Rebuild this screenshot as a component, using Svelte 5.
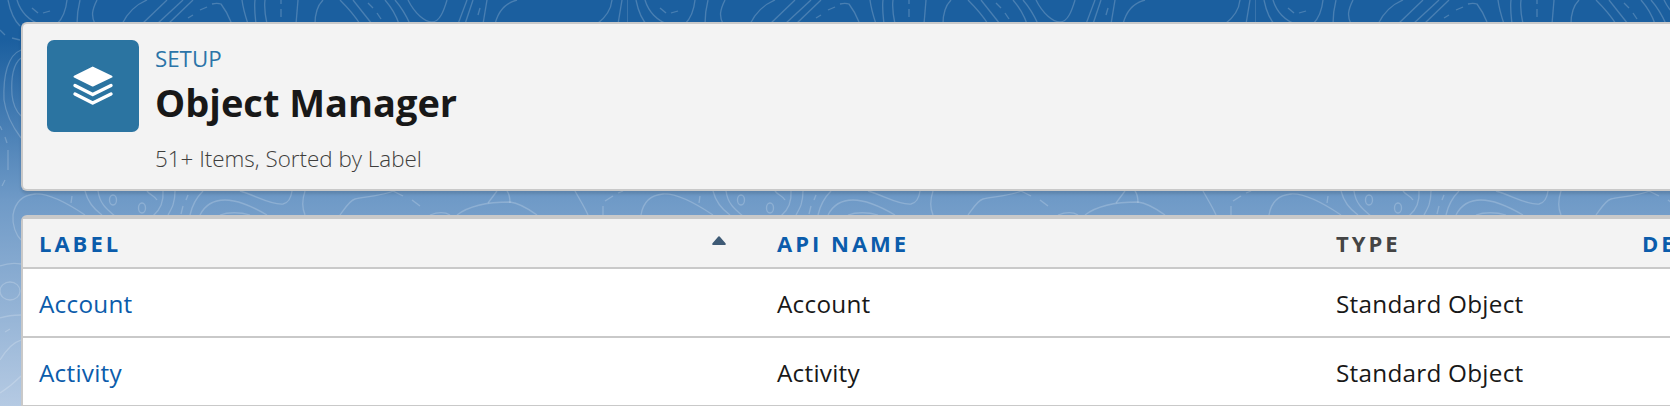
<script>
  const columnas = [
    { id: 'label', titulo: 'Label', sortable: true, sorted: true },
    { id: 'api', titulo: 'API Name', sortable: true },
    { id: 'type', titulo: 'Type', sortable: false },
    { id: 'desc', titulo: 'Description', sortable: true }
  ];

  const objetos = [
    { label: 'Account', api: 'Account', type: 'Standard Object' },
    { label: 'Activity', api: 'Activity', type: 'Standard Object' }
  ];

  // contour lines of the setup background, one tile is 628px wide
  const lineas = [
    // top strip
    'M8 0C10 10 14 20 20 26', 'M17 0C20 10 28 22 45 26', 'M32 8L38 13', 'M43 13L50 11',
    'M67 0C66 10 63 18 57 24', 'M80 0C78 8 77 15 77 24', 'M97 0C92 10 91 16 95 24',
    'M147 0C135 5 128 12 122 24', 'M167 0L142 24', 'M183 0L157 24', 'M193 0L168 24',
    'M193 15L188 18', 'M200 10L207 7', 'M212 4C216 3 218 3 221 4C224 8 228 14 231 22',
    'M242 0C243 8 245 15 248 24', 'M255 0C254 8 255 15 256 24', 'M265 0C264 8 265 15 267 24',
    'M281 0L281 4', 'M281 9L281 17', 'M298 0L296 24', 'M323 0C318 5 315 14 315 24',
    'M340 0C348 8 355 16 360 24', 'M353 0L372 24', 'M368 3L373 8', 'M377 13L381 19',
    'M385 0C392 8 396 15 399 24', 'M395 0C402 8 406 15 410 24',
    'M408 0C415 14 425 22 432 22C440 22 444 10 447 0',
    'M467 0L458 24', 'M473 0L465 24', 'M480 8L478 15', 'M487 0L483 24',
    'M517 0C505 3 498 12 495 24', 'M612 0C611 10 605 18 597 24', 'M622 0L618 24', 'M628 0L628 24',
    // gap between the cards
    'M13 215C15 203 22 195 35 194C50 193 70 205 85 215', 'M72 196L71 203',
    'M85 191C88 203 95 210 102 215', 'M98 191C100 205 108 210 115 216',
    'M163 191C164 203 160 210 153 216', 'M175 191C175 203 172 208 168 215',
    'M147 191C150 195 155 196 157 200', 'M188 195L186 200', 'M183 206L181 214',
    'M203 191C196 198 192 206 190 215', 'M200 215C205 205 213 200 225 200C240 200 255 208 267 215',
    'M220 215C228 212 240 212 250 215', 'M240 191C255 195 270 205 283 204C288 203 291 198 292 191',
    'M305 191C302 200 302 208 305 215', 'M340 215C345 208 350 200 355 199C365 197 385 195 393 191',
    'M393 191L403 196', 'M412 200L420 206', 'M430 215C438 212 445 212 450 215',
    'M457 215C470 205 490 202 510 202C520 203 530 210 537 215', 'M488 203L497 191',
    'M507 191C510 195 510 200 510 203', 'M575 191C580 200 585 208 588 215',
    'M605 201L613 196', 'M603 206L603 215', 'M618 193L623 191'
  ];

  // only on the left margin, the cards hide the rest
  const margen = [
    'M0 30L5 35', 'M12 38L20 40', 'M21 50C8 55 3 75 4 100C6 115 15 130 21 138',
    'M21 58C12 65 11 80 12 95C13 105 17 112 21 116', 'M0 126L2 130', 'M5 137L7 143',
    'M8 150L8 170', 'M5 180L2 186', 'M13 215C12 225 16 235 21 240',
    'M0 266C8 263 15 263 21 264', 'M0 318C6 316 14 315 21 315', 'M5 332L10 329',
    'M0 360C6 350 14 342 21 340', 'M0 393C8 388 15 382 21 376'
  ];
</script>

<div class="page">
  <svg class="contornos" width="1670" height="406" aria-hidden="true">
    <defs>
      <pattern id="topo" width="628" height="406" patternUnits="userSpaceOnUse">
        {#each lineas as d}
          <path {d} />
        {/each}
        <ellipse cx="113" cy="200" rx="3.5" ry="5" />
        <ellipse cx="142" cy="208" rx="3.5" ry="5" />
      </pattern>
    </defs>
    <rect width="1670" height="406" fill="url(#topo)" />
    <g class="margen">
      {#each margen as d}
        <path {d} />
      {/each}
      <ellipse cx="10" cy="291" rx="10" ry="9" />
    </g>
  </svg>

  <header class="cabecera">
    <div class="icono">
      <svg width="92" height="92" viewBox="0 0 92 92">
        <path class="capa" d="M27.5 36.7L45.7 27.6L64.5 36.7L45.7 45.6Z" />
        <path class="linea" d="M28 45.5L45.7 54.5L64 45.5" />
        <path class="linea" d="M28 54L45.7 63L64 54" />
      </svg>
    </div>
    <div class="titulos">
      <div class="migas">SETUP</div>
      <h1>Object Manager</h1>
    </div>
    <p class="meta">51+ Items, Sorted by Label</p>
  </header>

  <section class="tabla-card">
    <table>
      <colgroup>
        <col class="c1" />
        <col class="c2" />
        <col class="c3" />
        <col class="c4" />
      </colgroup>
      <thead>
        <tr>
          {#each columnas as col}
            <th class:enlace={col.sortable}>
              <div class="th-inner">
                <span>{col.titulo}</span>
                {#if col.sorted}
                  <svg class="orden" width="14" height="9" viewBox="0 0 14 9">
                    <path d="M7 0.3C7.5 0.3 7.8 0.6 8.1 0.9L13.5 7.2C14.1 8 13.7 9 12.7 9H1.3C0.3 9 -0.1 8 0.5 7.2L5.9 0.9C6.2 0.6 6.5 0.3 7 0.3Z" />
                  </svg>
                {/if}
              </div>
            </th>
          {/each}
        </tr>
      </thead>
      <tbody>
        {#each objetos as obj}
          <tr>
            <td><a href="#top">{obj.label}</a></td>
            <td>{obj.api}</td>
            <td>{obj.type}</td>
            <td></td>
          </tr>
        {/each}
      </tbody>
    </table>
  </section>
</div>

<style>
  :global(body) {
    margin: 0;
    overflow: hidden;
    font-family: "Open Sans", "Noto Sans", sans-serif;
  }

  .page {
    position: relative;
    width: 1670px;
    height: 406px;
    overflow: hidden;
    padding: 22px 0 0 21px;
    box-sizing: border-box;
    background: linear-gradient(to bottom, #1b5f9f 0, #1b5f9f 40px, #6f9ac7 200px, #b5cae3 406px);
  }

  .contornos {
    position: absolute;
    top: 0;
    left: 0;
  }

  .contornos path,
  .contornos ellipse {
    fill: none;
    stroke: rgba(255, 255, 255, 0.2);
    stroke-width: 1.3;
  }

  .cabecera {
    position: relative;
    width: 1700px;
    height: 169px;
    box-sizing: border-box;
    padding: 16px 0 0 24px;
    display: grid;
    grid-template-columns: 92px 1fr;
    column-gap: 16px;
    grid-template-rows: 92px auto;
    background: #f3f3f3;
    border: 2px solid #c9c9c9;
    border-width: 2px 0 2px 2px;
    border-radius: 6px 0 0 6px;
    box-shadow: 0 3px 3px rgba(0, 0, 0, 0.12);
  }

  .icono {
    width: 92px;
    height: 92px;
    background: #2b74a1;
    border-radius: 7px;
  }

  .icono svg {
    display: block;
  }

  .capa {
    fill: #fff;
    stroke: #fff;
    stroke-width: 2;
    stroke-linejoin: round;
  }

  .linea {
    fill: none;
    stroke: #fff;
    stroke-width: 3.4;
    stroke-linecap: round;
    stroke-linejoin: round;
  }

  .migas {
    margin-top: 5px;
    font-size: 22.3px;
    line-height: 28px;
    color: #2b74a8;
  }

  h1 {
    margin: 6px 0 0;
    font-size: 38px;
    line-height: 46px;
    font-weight: 700;
    color: #181818;
  }

  .meta {
    grid-column: 2;
    margin: 13px 0 0;
    font-size: 22.4px;
    line-height: 28px;
    font-weight: 300;
    color: #3e3e3c;
  }

  .tabla-card {
    position: relative;
    width: 1700px;
    margin-top: 24px;
    background: #fff;
    border-top: 4px solid #c9c9c9;
    border-left: 2px solid #c9c9c9;
    border-radius: 6px 0 0 0;
  }

  table {
    width: 1700px;
    table-layout: fixed;
    border-collapse: collapse;
  }

  .c1 { width: 738px; }
  .c2 { width: 559px; }
  .c3 { width: 306px; }

  th {
    height: 48px;
    padding: 0 0 0 16px;
    background: #f3f3f3;
    border-bottom: 2px solid #c9c9c9;
    text-align: left;
    box-sizing: content-box;
    font-size: 22px;
    font-weight: 700;
    letter-spacing: 3px;
    text-transform: uppercase;
    color: #444;
  }

  th.enlace {
    color: #0b5cab;
  }

  .th-inner {
    display: flex;
    justify-content: space-between;
    align-items: center;
  }

  .orden {
    margin: -6px 35px 0 0;
    fill: #3e5a75;
  }

  td {
    height: 66px;
    padding: 1px 0 0 16px;
    border-bottom: 2px solid #c9c9c9;
    box-sizing: content-box;
    font-size: 24.3px;
    letter-spacing: 0.25px;
    color: #181818;
  }

  td a {
    color: #0b5cab;
    text-decoration: none;
  }
</style>
